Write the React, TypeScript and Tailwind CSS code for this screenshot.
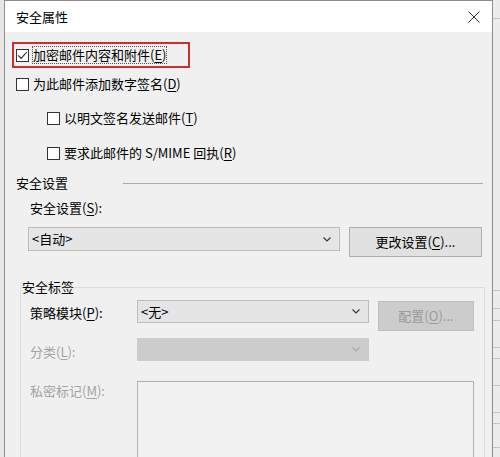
import React from "react";

const U = ({ c }: { c: string }) => (
  <span className="underline underline-offset-[2px] decoration-1">{c}</span>
);

function Checkbox({ checked }: { checked?: boolean }) {
  return (
    <div className="w-[13px] h-[13px] border border-[#333333] bg-white flex items-center justify-center shrink-0">
      {checked && (
        <svg width="11" height="11" viewBox="0 0 11 11">
          <path d="M1.2 5.4 L4.1 8.4 L9.8 2" fill="none" stroke="#222" strokeWidth="1.1" />
        </svg>
      )}
    </div>
  );
}

function Chevron({ color }: { color: string }) {
  return (
    <svg width="8" height="5" viewBox="0 0 8 5">
      <path d="M0.5 0.5 L4 4 L7.5 0.5" fill="none" stroke={color} strokeWidth="1.1" />
    </svg>
  );
}

export default function App() {
  return (
    <div className="w-[500px] h-[457px] overflow-hidden bg-[#e6e6e6] flex font-['Noto_Sans_CJK_SC','Liberation_Sans',sans-serif] text-[13px] text-black leading-[20px]">
      <div className="ml-[4px] w-[489px] h-[480px] border-l border-t border-r border-[#8e8e8e] bg-[#f0f0f0] flex flex-col shrink-0">
        <div className="h-[31px] bg-white flex items-center justify-between pl-[11px] pr-[12px] shrink-0">
          <span>安全属性</span>
          <svg width="12" height="12" viewBox="0 0 12 12">
            <path d="M0.5 0.5 L11.5 11.5 M11.5 0.5 L0.5 11.5" stroke="#333" strokeWidth="1" />
          </svg>
        </div>
        <div className="flex flex-col pl-[11px] pr-[9px]">
          <div className="mt-[10px] -ml-[4px] w-[178px] h-[26px] border-2 border-[#d42b2b] flex items-center pl-[2px] gap-[3px]">
            <Checkbox checked />
            <span className="border border-dotted border-[#555] leading-[16px]">
              加密邮件内容和附件(<U c="E" />)
            </span>
          </div>
          <div className="mt-[6px] h-[20px] flex items-center gap-[4px]">
            <Checkbox />
            <span>
              为此邮件添加数字签名(<U c="D" />)
            </span>
          </div>
          <div className="mt-[14px] ml-[31px] h-[20px] flex items-center gap-[4px]">
            <Checkbox />
            <span>
              以明文签名发送邮件(<U c="T" />)
            </span>
          </div>
          <div className="mt-[15px] ml-[31px] h-[20px] flex items-center gap-[4px]">
            <Checkbox />
            <span>
              要求此邮件的 S/MIME 回执(<U c="R" />)
            </span>
          </div>
          <div className="mt-[10px] h-[20px] flex items-center">
            <span className="w-[107px] shrink-0">安全设置</span>
            <div className="flex-1 h-px bg-[#a8a8a8]" />
          </div>
          <div className="mt-[5px] h-[20px] pl-[14px]">
            安全设置(<U c="S" />):
          </div>
          <div className="mt-[9px] flex items-start">
            <div className="ml-[12px] w-[312px] h-[24px] border border-[#bcbcbc] bg-[#e5e5e5] flex items-center justify-between pl-[3px] pr-[8px]">
              <span>&lt;自动&gt;</span>
              <Chevron color="#333" />
            </div>
            <div className="ml-[9px] w-[133px] h-[30px] border border-[#adadad] bg-[#e1e1e1] flex items-center justify-center">
              更改设置(<U c="C" />)...
            </div>
          </div>
          <fieldset className="mt-[20px] ml-[4px] -mr-[2px] border border-[#dcdcdc] h-[220px]">
            <legend className="ml-[1px] h-[20px] leading-[20px]">安全标签</legend>
            <div className="pl-[9px] pr-[9px] flex flex-col">
              <div className="mt-[3px] flex items-start">
                <div className="w-[107px] h-[23px] leading-[23px] mt-[1px] shrink-0">
                  策略模块(<U c="P" />):
                </div>
                <div className="w-[232px] h-[23px] border border-[#bcbcbc] bg-[#e5e5e5] flex items-center justify-between pl-[3px] pr-[8px]">
                  <span>&lt;无&gt;</span>
                  <Chevron color="#333" />
                </div>
                <div className="ml-[9px] mt-[1px] w-[96px] h-[30px] border border-[#bfbfbf] bg-[#cccccc] text-[#9a9a9a] flex items-center justify-center">
                  配置(<U c="O" />)...
                </div>
              </div>
              <div className="mt-[7px] flex items-start">
                <div className="w-[107px] h-[23px] leading-[23px] mt-[2px] shrink-0 text-[#a3a3a3]">
                  分类(<U c="L" />):
                </div>
                <div className="w-[232px] h-[23px] border border-[#cccccc] bg-[#cccccc] flex items-center justify-end pr-[8px]">
                  <Chevron color="#a8a8a8" />
                </div>
              </div>
              <div className="mt-[18px] flex items-start">
                <div className="w-[107px] h-[20px] shrink-0 text-[#a3a3a3]">
                  私密标记(<U c="M" />):
                </div>
                <div className="w-[337px] h-[100px] border border-[#a9b1b9] bg-[#f1f1f1]" />
              </div>
            </div>
          </fieldset>
        </div>
      </div>
      <div className="w-[7px] flex flex-col bg-[#ececec] shrink-0">
        <div className="h-[19px] border-b border-[#c4c4c4]" />
        <div className="h-[272px] border-b border-[#c4c4c4]" />
        <div className="h-[18px] border-b border-[#c4c4c4]" />
        <div className="h-[12px] border-b border-[#c4c4c4]" />
        <div className="h-[27px] border-b border-[#c4c4c4]" />
        <div className="h-[11px] border-b border-[#c4c4c4]" />
        <div className="h-[27px] border-b border-[#c4c4c4]" />
        <div className="h-[27px] border-b border-[#c4c4c4]" />
        <div className="h-[11px] border-b border-[#c4c4c4]" />
        <div className="h-[24px] border-b border-[#c4c4c4]" />
      </div>
    </div>
  );
}
